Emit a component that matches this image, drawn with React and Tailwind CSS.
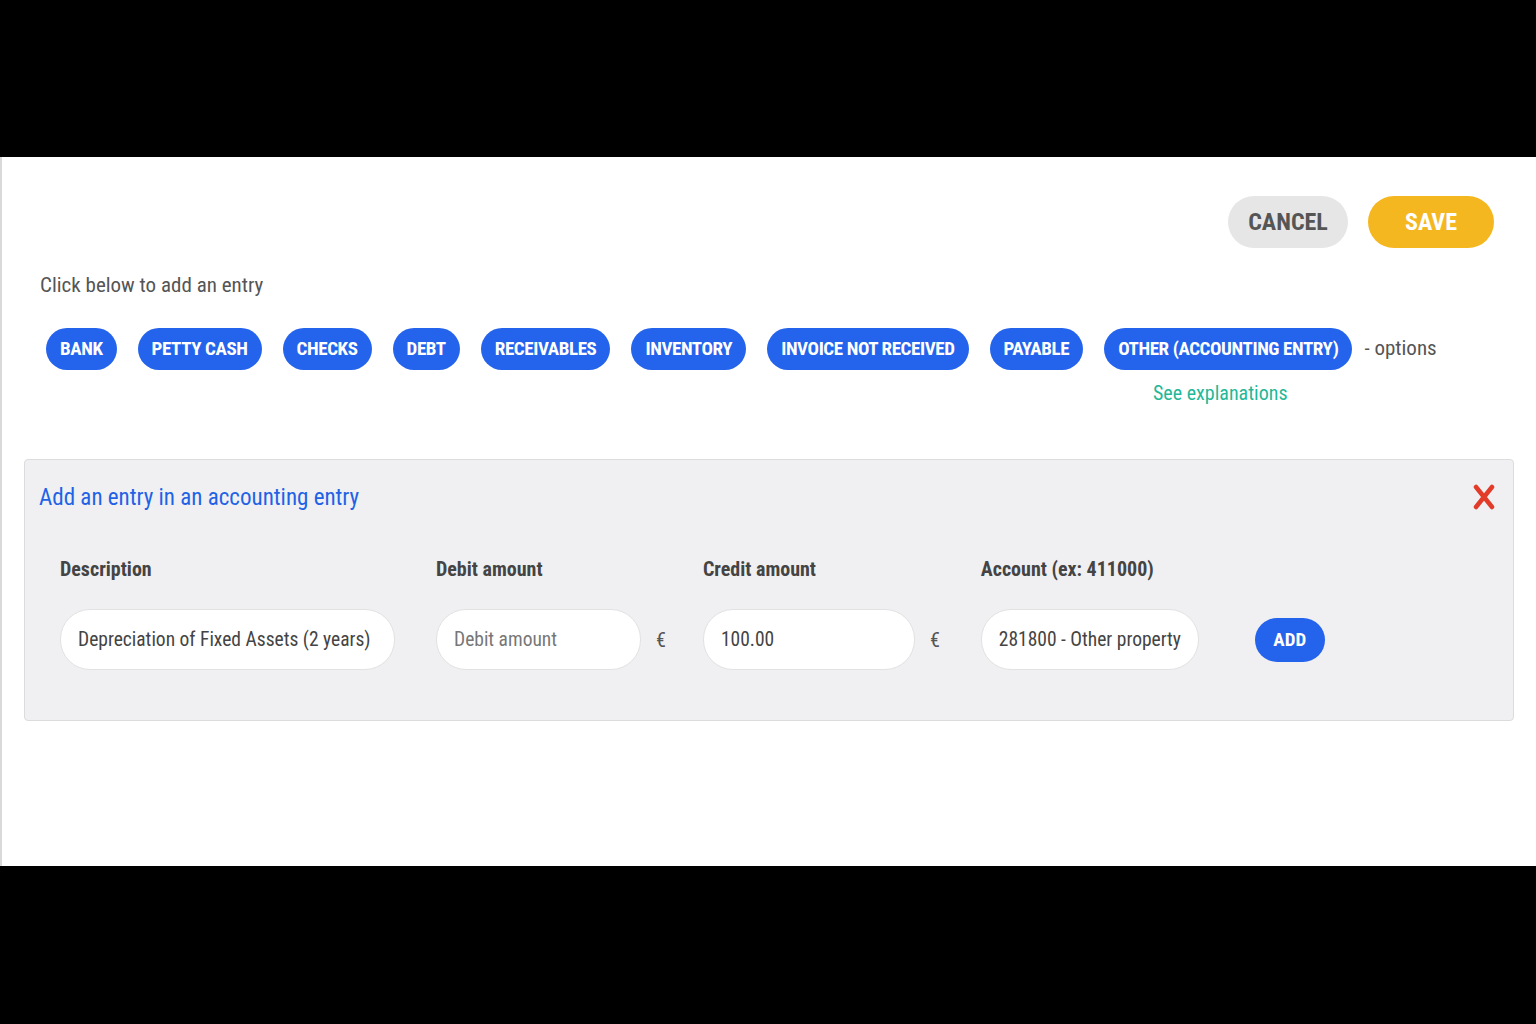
const chips = [
  "BANK",
  "PETTY CASH",
  "CHECKS",
  "DEBT",
  "RECEIVABLES",
  "INVENTORY",
  "INVOICE NOT RECEIVED",
  "PAYABLE",
  "OTHER (ACCOUNTING ENTRY)",
];

const font = {
  fontFamily: "'Roboto Condensed', 'Liberation Sans Narrow', 'Arial Narrow', Roboto, sans-serif",
};

function Field({ label, width, value, placeholder, euro }) {
  return (
    <div className="flex flex-col">
      <label className="mb-[28px] text-[20px] font-bold leading-6 text-[#444]">{label}</label>
      <div className="flex items-center">
        <input
          readOnly
          value={value}
          placeholder={placeholder}
          className={`${width} h-[61px] rounded-[30px] border border-[#e2e2e2] bg-white px-[17px] text-[19.5px] text-[#444] placeholder:text-[#777] outline-none`}
        />
        {euro && <span className="ml-[15px] text-[20px] text-[#555]">€</span>}
      </div>
    </div>
  );
}

export default function App() {
  return (
    <div className="flex h-[1024px] w-full flex-col bg-black font-stretch-condensed" style={font}>
      <div className="h-[157px]" />
      <div className="flex h-[709px] flex-col border-l-2 border-[#d9d9d9] bg-white">
        <div className="flex justify-end gap-5 pr-[42px] pt-[39px]">
          <button className="h-[52px] w-[120px] rounded-full bg-[#e6e6e6] text-[24px] font-bold text-[#555]">
            CANCEL
          </button>
          <button className="h-[52px] w-[126px] rounded-full bg-[#f5b71f] text-[24px] font-bold text-white">
            SAVE
          </button>
        </div>

        <p className="mt-[23px] pl-[38px] text-[21px] leading-7 text-[#555]">Click below to add an entry</p>

        <div className="mt-[29px] flex items-center whitespace-nowrap pl-[44px]">
          <div className="flex items-center gap-[21px]">
            {chips.map((c) => (
              <span
                key={c}
                className="flex h-[42px] shrink-0 items-center rounded-full bg-[#2463eb] px-[14px] text-[19px] font-bold tracking-[-0.4px] text-white"
              >
                {c}
              </span>
            ))}
          </div>
          <span className="ml-[12px] text-[21px] text-[#555]">- options</span>
        </div>
        <div className="flex pl-[1151px] pt-[8px]">
          <a className="text-[20px] text-[#1fb898]">See explanations</a>
        </div>

        <div className="mx-[22px] mt-[51px] h-[262px] rounded-[4px] border border-[#dcdcdc] bg-[#f0f0f2] px-[14px] pt-[22px]">
          <div className="flex items-start justify-between">
            <h3 className="text-[23px] leading-8 text-[#1f62e6]">Add an entry in an accounting entry</h3>
            <svg width="22" height="26" viewBox="0 0 22 26" className="mr-[4px] mt-[2px]">
              <path d="M3 3 L19 23 M19 3 L3 23" stroke="#e23b2a" strokeWidth="4.5" strokeLinecap="round" />
            </svg>
          </div>

          <div className="mt-[43px] flex items-end pl-[21px]">
            <Field label="Description" width="w-[335px]" value="Depreciation of Fixed Assets (2 years)" />
            <div className="w-[41px]" />
            <Field label="Debit amount" width="w-[205px]" placeholder="Debit amount" euro />
            <div className="w-[37px]" />
            <Field label="Credit amount" width="w-[212px]" value="100.00" euro />
            <div className="w-[41px]" />
            <Field label="Account (ex: 411000)" width="w-[218px]" value="281800 - Other property" />
            <button className="mb-[8px] ml-[56px] h-[44px] w-[70px] rounded-full bg-[#2463eb] text-[19px] font-bold text-white">
              ADD
            </button>
          </div>
        </div>
      </div>
      <div className="flex-1" />
    </div>
  );
}
